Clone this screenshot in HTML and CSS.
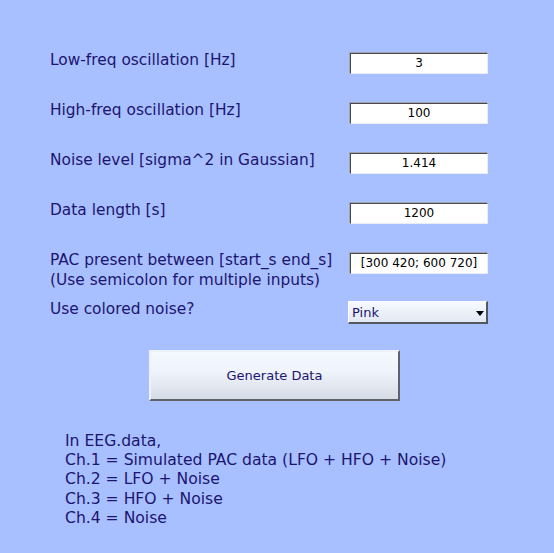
FILE: index.html
```html
<!DOCTYPE html>
<html>
<head>
<meta charset="utf-8">
<link rel="stylesheet" href="styles.css">
</head>
<body>
<div class="panel">
  <div class="form">
    <div class="row">
      <div class="label">Low-freq oscillation [Hz]</div>
      <div class="field">3</div>
    </div>
    <div class="row">
      <div class="label">High-freq oscillation [Hz]</div>
      <div class="field">100</div>
    </div>
    <div class="row">
      <div class="label">Noise level [sigma^2 in Gaussian]</div>
      <div class="field">1.414</div>
    </div>
    <div class="row">
      <div class="label">Data length [s]</div>
      <div class="field">1200</div>
    </div>
    <div class="row row-short">
      <div class="label">PAC present between [start_s end_s]<br>(Use semicolon for multiple inputs)</div>
      <div class="field">[300 420; 600 720]</div>
    </div>
    <div class="row">
      <div class="label">Use colored noise?</div>
      <div class="select"><span>Pink</span><span class="arrow"></span></div>
    </div>
  </div>
  <div class="btn-wrap">
    <div class="button">Generate Data</div>
  </div>
  <div class="notes">
    <div>In EEG.data,</div>
    <div>Ch.1 = Simulated PAC data (LFO + HFO + Noise)</div>
    <div>Ch.2 = LFO + Noise</div>
    <div>Ch.3 = HFO + Noise</div>
    <div>Ch.4 = Noise</div>
  </div>
</div>
</body>
</html>
```

FILE: styles.css
```css
html, body {
  margin: 0;
  padding: 0;
}
body {
  background: #a8c0ff;
  width: 554px;
  height: 553px;
  overflow: hidden;
  font-family: "DejaVu Sans", sans-serif;
  color: #1c1470;
}
.panel {
  padding-top: 52px;
}
.form {
  display: flex;
  flex-direction: column;
  padding-left: 50px;
}
.row {
  display: flex;
  align-items: flex-start;
  height: 50px;
}
.row-short {
  height: 49px;
}
.label {
  width: 299px;
  font-size: 15.4px;
  line-height: 19.5px;
  margin-top: -1px;
}
.field {
  box-sizing: border-box;
  width: 138px;
  height: 21px;
  margin: 1px 0 0 1px;
  background: #fff;
  border-style: solid;
  border-width: 1px;
  border-color: #484850 #e8ecf4 #e8ecf4 #484850;
  box-shadow: -1px -1px 0 #a0a4b0;
  font-size: 12px;
  line-height: 19px;
  color: #000;
  text-align: center;
  white-space: nowrap;
}
.select {
  box-sizing: border-box;
  width: 140px;
  height: 23px;
  margin-left: -1px;
  display: flex;
  align-items: center;
  justify-content: space-between;
  padding: 0 2px 0 3px;
  background: linear-gradient(#f6f9ff, #e2e8f2);
  border-style: solid;
  border-width: 1px 2px 2px 1px;
  border-color: #ffffff #505860 #505860 #ffffff;
  font-size: 13px;
}
.arrow {
  width: 0;
  height: 0;
  border-left: 4px solid transparent;
  border-right: 4px solid transparent;
  border-top: 5px solid #000;
  margin-top: 2px;
}
.btn-wrap {
  padding: 0 0 0 149px;
  margin-top: -1px;
}
.button {
  box-sizing: border-box;
  width: 251px;
  height: 51px;
  display: flex;
  align-items: center;
  justify-content: center;
  background: linear-gradient(#f4f8ff 0%, #f0f4fc 40%, #d6dce6 100%);
  border-style: solid;
  border-width: 2px;
  border-color: #eef2fa #606468 #606468 #eef2fa;
  font-size: 13px;
}
.notes {
  padding: 31px 0 0 65px;
  font-size: 15.6px;
  line-height: 19.2px;
}
```
